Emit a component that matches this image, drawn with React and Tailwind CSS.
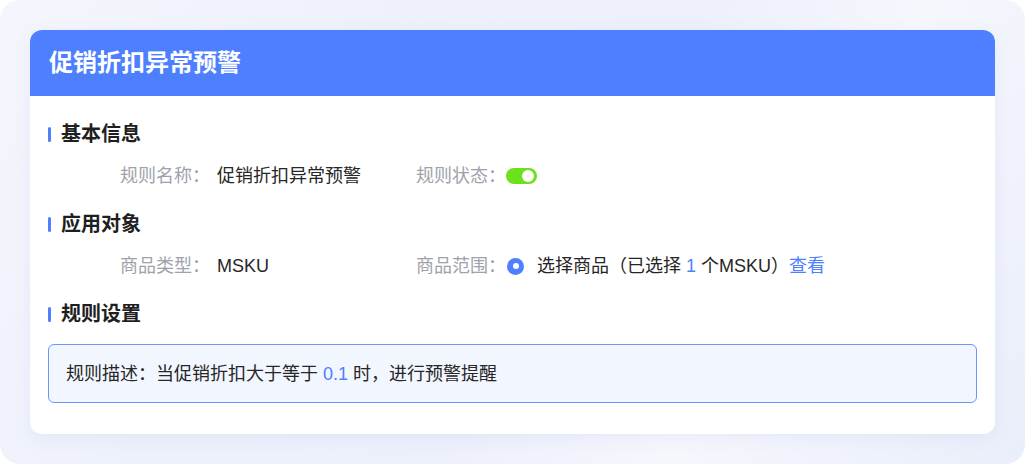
export default function App() {
  const font = { fontFamily: '"Liberation Sans", "Noto Sans CJK SC", sans-serif' };
  return (
    <div className="w-[1025px] h-[464px] bg-white" style={font}>
      <div className="w-full h-full rounded-[20px] pt-[30px] pl-[30px] bg-[linear-gradient(120deg,#f4f6fd_0%,#eef1fb_30%,#edf0fb_55%,#f5f7fd_72%,#eaeefa_100%)]">
        <div className="w-[965px] h-[404px] rounded-[12px] bg-white overflow-hidden shadow-[0_4px_18px_rgba(90,110,190,0.08)]">
          <div className="h-[66px] bg-[#4e7fff] flex items-center pl-[19px]">
            <span className="text-[24px] leading-[32px] font-semibold text-white">促销折扣异常预警</span>
          </div>
          <div className="pl-[18px] pr-[18px] pt-[24px]">
            <SectionTitle>基本信息</SectionTitle>
            <div className="mt-[15px] pl-[72px] flex items-center h-[26px] text-[18px] leading-[26px]">
              <div className="w-[296px] flex items-center">
                <span className="w-[97px] text-[#9ea2ab]">规则名称：</span>
                <span className="text-[#262626]">促销折扣异常预警</span>
              </div>
              <div className="flex items-center">
                <span className="w-[90px] text-[#9ea2ab]">规则状态：</span>
                <span className="relative w-[31px] h-[16px] rounded-full bg-[#6ee01c]">
                  <span className="absolute right-[3px] top-[2px] w-[12px] h-[12px] rounded-full bg-white" />
                </span>
              </div>
            </div>
            <div className="mt-[21px]">
              <SectionTitle>应用对象</SectionTitle>
            </div>
            <div className="mt-[15px] pl-[72px] flex items-center h-[26px] text-[18px] leading-[26px]">
              <div className="w-[296px] flex items-center">
                <span className="w-[97px] text-[#9ea2ab]">商品类型：</span>
                <span className="text-[#262626]">MSKU</span>
              </div>
              <div className="flex items-center">
                <span className="w-[91px] text-[#9ea2ab]">商品范围：</span>
                <span className="w-[17px] h-[17px] rounded-full bg-[#4e7fff] flex items-center justify-center">
                  <span className="w-[6px] h-[6px] rounded-full bg-white" />
                </span>
                <span className="ml-[13px] text-[#262626]">
                  选择商品（已选择 <span className="text-[#4e7fff]">1</span> 个MSKU）<span className="text-[#4e7fff]">查看</span>
                </span>
              </div>
            </div>
            <div className="mt-[21px]">
              <SectionTitle>规则设置</SectionTitle>
            </div>
            <div className="mt-[16px] h-[59px] border-[1.5px] border-[#6a94ff] bg-[#f2f6ff] rounded-[6px] flex items-center pl-[17px] text-[18px] leading-[26px] text-[#262626]">
              规则描述：当促销折扣大于等于 <span className="text-[#4e7fff] mx-[5px]">0.1</span> 时，进行预警提醒
            </div>
          </div>
        </div>
      </div>
    </div>
  );
}

function SectionTitle({ children }) {
  return (
    <div className="flex items-center h-[28px]">
      <span className="w-[3px] h-[15px] rounded-full bg-[#4e7fff]" />
      <span className="ml-[10px] text-[20px] leading-[28px] font-semibold text-[#1f1f1f]">{children}</span>
    </div>
  );
}
